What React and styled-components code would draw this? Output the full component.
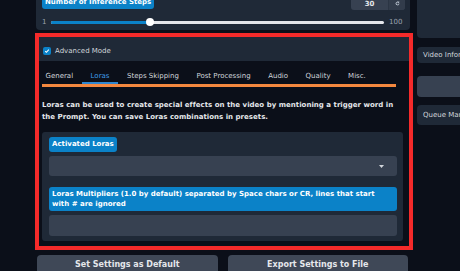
import React from "react";
import styled, { createGlobalStyle } from "styled-components";

const Global = createGlobalStyle`
  html, body { margin: 0; padding: 0; background: #0b0f19; overflow: hidden; }
  body { font-family: "DejaVu Sans", Verdana, sans-serif; width: 460px; height: 271px; }
  * { box-sizing: border-box; }
`;

const Page = styled.div`
  display: flex;
  gap: 7px;
  padding-left: 37px;
  margin-top: -13px;
`;

const LeftCol = styled.div`
  width: 373px;
  flex: none;
  display: flex;
  flex-direction: column;
`;

const RightCol = styled.div`
  width: 120px;
  flex: none;
  display: flex;
  flex-direction: column;
`;

const Block = styled.div`
  background: #1f2937;
  border-radius: 4px;
  padding: 7px 5px 3px 6px;
  margin-left: -1px;
`;

const BlockHead = styled.div`
  display: flex;
  justify-content: space-between;
  align-items: flex-start;
`;

const Badge = styled.div`
  display: inline-block;
  background: #0b82c8;
  color: #ffffff;
  font-weight: bold;
  font-size: 7px;
  line-height: ${(p) => p.$lh || 15}px;
  padding: ${(p) => p.$pad || "0 3px"};
  border-radius: 3px;
  align-self: flex-start;
`;

const TopBadge = styled(Badge)`
  line-height: 13px;
  padding: 2px 3px 0;
`;

const NumBox = styled.div`
  display: flex;
  height: 16px;
  width: 54px;
  border-radius: 3px;
  overflow: hidden;
  background: #374151;
`;

const NumVal = styled.div`
  flex: 1;
  color: #e5e7eb;
  font-size: 7px;
  font-weight: bold;
  display: flex;
  align-items: center;
  justify-content: center;
  padding-top: 3px;
`;

const ResetBtn = styled.div`
  width: 17px;
  border-left: 1px solid #2b3544;
  background: #323c4b;
  display: flex;
  align-items: center;
  justify-content: center;
  padding-top: 3px;
`;

const SliderRow = styled.div`
  display: flex;
  align-items: center;
  gap: 5px;
  height: 10px;
  margin-top: 7px;
`;

const Tick = styled.span`
  font-size: 7px;
  color: #9ca3af;
  width: ${(p) => p.$w}px;
`;

const Track = styled.div`
  flex: 1;
  height: 3px;
  border-radius: 2px;
  background: #e5e7eb;
  position: relative;
`;

const Fill = styled.div`
  height: 100%;
  border-radius: 2px;
  background: #0b82c8;
`;

const Thumb = styled.div`
  position: absolute;
  top: 50%;
  width: 8px;
  height: 8px;
  margin: -4px 0 0 -4px;
  border-radius: 50%;
  background: #ffffff;
`;

const Advanced = styled.section`
  position: relative;
  margin-top: 3px;
  padding-bottom: 9px;
`;

const RedFrame = styled.div`
  position: absolute;
  top: 0;
  left: -2px;
  right: -3px;
  bottom: 0;
  border: 4px solid #f52a2a;
  pointer-events: none;
`;

const AdvHeader = styled.div`
  background: #1f2937;
  height: 28px;
  display: flex;
  align-items: center;
  gap: 4px;
  padding: 8px 0 0 6px;
  color: #d1d5db;
  font-size: 7px;
`;

const Check = styled.div`
  width: 8px;
  height: 8px;
  border-radius: 2px;
  background: #0b82c8;
  display: flex;
  align-items: center;
  justify-content: center;
`;

const TabNav = styled.div`
  display: flex;
  gap: 0.5px;
`;

const Tab = styled.div`
  font-size: 7px;
  line-height: 10px;
  padding: 10px 8.5px 1px;
  color: ${(p) => (p.$active ? "#3f9ce6" : "#d1d5db")};
  border-bottom: 2px solid ${(p) => (p.$active ? "#2f86d0" : "transparent")};
  white-space: nowrap;
`;

const Orange = styled.div`
  height: 3px;
  background: #f4883f;
  margin: 0 14px 0 5px;
`;

const Content = styled.div`
  padding: 12px 7px 0 5px;
`;

const Para = styled.p`
  margin: 0;
  font-size: 7px;
  font-weight: bold;
  line-height: 12px;
  color: #e5e7eb;
  letter-spacing: 0.02px;
`;

const LoraPanel = styled.div`
  margin-top: 9px;
  background: #1f2937;
  border-radius: 3px;
  padding: 5px 6px 5px 7px;
  display: flex;
  flex-direction: column;
`;

const Input = styled.div`
  height: ${(p) => p.$h}px;
  margin-top: 4px;
  background: #374151;
  border-radius: 3px;
  display: flex;
  align-items: center;
  justify-content: flex-end;
  padding-right: 13px;
`;

const MultBadge = styled(Badge)`
  margin-top: 11px;
  align-self: stretch;
  line-height: 10px;
  padding: 2px 3px;
`;

const ButtonRow = styled.div`
  display: flex;
  gap: 10px;
  margin-top: 5px;
  padding-right: 2px;
`;

const Button = styled.div`
  flex: 1;
  height: 24px;
  background: #3f4857;
  border-radius: 4px;
  color: #e5e7eb;
  font-weight: bold;
  font-size: 8px;
  display: flex;
  justify-content: center;
  padding-top: 5px;
`;

const RightPanel = styled.div`
  height: 51px;
  background: #1f2937;
  border-radius: 4px;
`;

const SideBtn = styled.div`
  margin-top: ${(p) => p.$mt}px;
  height: ${(p) => p.$h}px;
  background: ${(p) => (p.$gray ? "#374151" : "#1f2937")};
  border-radius: 4px;
  color: #d1d5db;
  font-size: 7px;
  display: flex;
  align-items: center;
  padding-left: 6px;
  white-space: nowrap;
`;

export default function App() {
  const tabs = ["General", "Loras", "Steps Skipping", "Post Processing", "Audio", "Quality", "Misc."];
  return (
    <>
      <Global />
      <Page>
        <LeftCol>
          <Block>
            <BlockHead>
              <TopBadge>Number of Inference Steps</TopBadge>
              <NumBox>
                <NumVal>30</NumVal>
                <ResetBtn>
                  <svg width="5" height="5" viewBox="0 0 10 10" fill="none" stroke="#cbd5e1" strokeWidth="1.6">
                    <path d="M8 5a3 3 0 1 1-1-2.3" />
                    <path d="M7.5 0.8v2.4h-2.4" />
                  </svg>
                </ResetBtn>
              </NumBox>
            </BlockHead>
            <SliderRow>
              <Tick $w={4}>1</Tick>
              <Track>
                <Fill style={{ width: "29.8%" }} />
                <Thumb style={{ left: "29.8%" }} />
              </Track>
              <Tick $w={16}>100</Tick>
            </SliderRow>
          </Block>

          <Advanced>
            <AdvHeader>
              <Check>
                <svg width="6" height="6" viewBox="0 0 10 10" fill="none" stroke="#fff" strokeWidth="1.8">
                  <path d="M2 5.2l2 2 4-4.4" />
                </svg>
              </Check>
              Advanced Mode
            </AdvHeader>
            <TabNav>
              {tabs.map((t) => (
                <Tab key={t} $active={t === "Loras"}>{t}</Tab>
              ))}
            </TabNav>
            <Orange />
            <Content>
              <Para>
                Loras can be used to create special effects on the video by mentioning a trigger word in the Prompt. You can save Loras combinations in presets.
              </Para>
              <LoraPanel>
                <Badge>Activated Loras</Badge>
                <Input $h={20}>
                  <svg width="5" height="3" viewBox="0 0 5 3">
                    <path d="M0 0h5L2.5 3z" fill="#d1d5db" />
                  </svg>
                </Input>
                <MultBadge>
                  Loras Multipliers (1.0 by default) separated by Space chars or CR, lines that start with # are ignored
                </MultBadge>
                <Input $h={21} />
              </LoraPanel>
            </Content>
            <RedFrame />
          </Advanced>

          <ButtonRow>
            <Button>Set Settings as Default</Button>
            <Button>Export Settings to File</Button>
          </ButtonRow>
        </LeftCol>

        <RightCol>
          <RightPanel />
          <SideBtn $mt={9} $h={16}>Video Informations</SideBtn>
          <SideBtn $mt={13} $h={21} $gray />
          <SideBtn $mt={8} $h={20}>Queue Management</SideBtn>
        </RightCol>
      </Page>
    </>
  );
}
